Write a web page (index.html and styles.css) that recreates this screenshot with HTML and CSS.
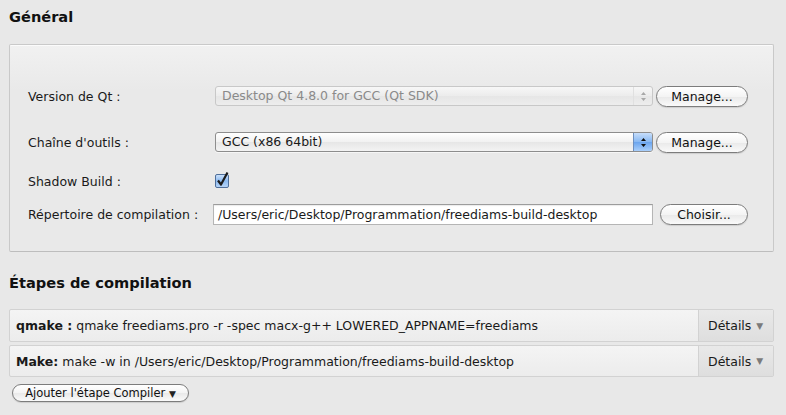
FILE: index.html
```html
<!DOCTYPE html>
<html lang="fr">
<head>
<meta charset="utf-8">
<title>Paramètres de compilation</title>
<link rel="stylesheet" href="styles.css">
</head>
<body>
<div class="page">
  <h2 class="section-title">Général</h2>
  <div class="group">
    <div class="form-row row-qt">
      <span class="label">Version de Qt :</span>
      <div class="combo combo-disabled">
        <span class="combo-text">Desktop Qt 4.8.0 for GCC (Qt SDK)</span>
        <span class="combo-arrows">
          <svg width="7" height="11" viewBox="0 0 7 11"><path d="M3.5 1 L6 4 H1 Z M3.5 10 L6 7 H1 Z" fill="#a8a8a8"/></svg>
        </span>
      </div>
      <button class="pill-btn btn-manage">Manage...</button>
    </div>
    <div class="form-row row-tool">
      <span class="label">Chaîne d'outils :</span>
      <div class="combo combo-active">
        <span class="combo-text">GCC (x86 64bit)</span>
        <span class="combo-arrows">
          <svg width="7" height="11" viewBox="0 0 7 11"><path d="M3.5 1 L6 4 H1 Z M3.5 10 L6 7 H1 Z" fill="#111"/></svg>
        </span>
      </div>
      <button class="pill-btn btn-manage">Manage...</button>
    </div>
    <div class="form-row row-shadow">
      <span class="label">Shadow Build :</span>
      <span class="checkbox">
        <svg width="17" height="17" viewBox="0 0 17 17">
          <defs>
            <linearGradient id="cbg" x1="0" y1="0" x2="0" y2="1">
              <stop offset="0" stop-color="#cfe3fb"/>
              <stop offset="0.5" stop-color="#8cbaf0"/>
              <stop offset="1" stop-color="#b9d6f8"/>
            </linearGradient>
          </defs>
          <rect x="1.5" y="3.5" width="13" height="13" rx="1.5" fill="url(#cbg)" stroke="#4f6f9a"/>
          <path d="M4 9.5 L7 13.5 L13.5 1.5" fill="none" stroke="#1c1c1c" stroke-width="2.2" stroke-linejoin="round"/>
        </svg>
      </span>
    </div>
    <div class="form-row row-dir">
      <span class="label">Répertoire de compilation :</span>
      <div class="line-edit">/Users/eric/Desktop/Programmation/freediams-build-desktop</div>
      <button class="pill-btn btn-choose">Choisir...</button>
    </div>
  </div>

  <h2 class="section-title steps-title">Étapes de compilation</h2>
  <div class="step">
    <div class="step-text"><b>qmake :</b> qmake freediams.pro -r -spec macx-g++ LOWERED_APPNAME=freediams</div>
    <div class="step-details">Détails <span class="tri">▼</span></div>
  </div>
  <div class="step">
    <div class="step-text"><b>Make:</b> make -w in /Users/eric/Desktop/Programmation/freediams-build-desktop</div>
    <div class="step-details">Détails <span class="tri">▼</span></div>
  </div>
  <button class="pill-btn btn-add">Ajouter l'étape Compiler <span class="add-tri">▼</span></button>
</div>
</body>
</html>
```

FILE: styles.css
```css
* { box-sizing: border-box; }

html, body {
  margin: 0;
  padding: 0;
  background: #e8e8e8;
}

body {
  font-family: "DejaVu Sans", "Liberation Sans", sans-serif;
  font-size: 12.5px;
  color: #1a1a1a;
  width: 786px;
  height: 415px;
  overflow: hidden;
}

.page {
  padding: 0 12px 0 9px;
}

.section-title {
  margin: 0;
  font-size: 14.6px;
  font-weight: bold;
  color: #111;
  height: 20px;
  line-height: 20px;
  padding-top: 7px;
  margin-bottom: 24px;
}

.group {
  border: 1px solid #c9c9c9;
  border-bottom-color: #bdbdbd;
  border-radius: 2px;
  background: linear-gradient(#f1f1f1, #e9e9e9 45px, #e9e9e9);
  height: 208px;
  padding: 40px 0 0 18px;
  box-shadow: inset 0 1px 0 #fbfbfb;
}

.form-row {
  display: grid;
  grid-template-columns: 187px 438px auto;
  align-items: center;
  height: 22px;
}

.row-tool { margin-top: 24px; }
.row-shadow { margin-top: 17px; }
.row-dir { margin-top: 11px; grid-template-columns: 185px 440px auto; }

.label {
  color: #1a1a1a;
  white-space: nowrap;
}

.combo {
  height: 20px;
  border: 1px solid #a6a6a6;
  border-radius: 3px;
  display: flex;
  align-items: stretch;
  background: linear-gradient(#ffffff, #f1f1f1 50%, #e6e6e6 51%, #f3f3f3);
  overflow: hidden;
}

.combo-text {
  flex: 1;
  padding-left: 6px;
  line-height: 18px;
  white-space: nowrap;
}

.combo-arrows {
  width: 19px;
  display: flex;
  align-items: center;
  justify-content: center;
}

.combo-disabled {
  border-color: #c8c8c8;
  background: linear-gradient(#f7f7f7, #ececec 50%, #e6e6e6 51%, #ededed);
}

.combo-disabled .combo-text { color: #8a8a8a; }

.combo-disabled .combo-arrows {
  border-left: 1px solid #e0e0e0;
}

.combo-active {
  border-color: #8d8d8d;
  box-shadow: 0 1px 0 rgba(255,255,255,0.6);
}

.combo-active .combo-arrows {
  border-left: 1px solid #6d8fbf;
  background: linear-gradient(#c7defb, #86b7f2 50%, #6aa4ee 51%, #a9cffb);
}

.pill-btn {
  font-family: inherit;
  font-size: 12.5px;
  color: #111;
  height: 21px;
  border: 1px solid #7c7c7c;
  border-radius: 11px;
  background: linear-gradient(#ffffff, #f4f4f4 50%, #e9e9e9 51%, #fafafa);
  padding: 0;
  box-shadow: 0 1px 1px rgba(0,0,0,0.12);
  cursor: default;
}

.btn-manage {
  width: 92px;
  margin-left: 3px;
}

.btn-choose {
  width: 88px;
  margin-left: 7px;
}

.checkbox {
  display: flex;
  align-items: center;
  height: 17px;
  margin-left: -1px;
  margin-top: -3px;
}

.line-edit {
  height: 21px;
  border: 1px solid #b5b5b5;
  border-top-color: #9c9c9c;
  background: #fff;
  line-height: 19px;
  padding-left: 4px;
  white-space: nowrap;
  box-shadow: inset 0 1px 1px rgba(0,0,0,0.08);
}

.steps-title {
  padding-top: 0;
  margin-top: 21px;
  margin-bottom: 16px;
}

.step {
  display: flex;
  height: 33px;
  border: 1px solid #d2d2d2;
  border-radius: 2px;
  background: linear-gradient(#f4f4f4, #ececec);
  margin-bottom: 3px;
  width: 765px;
}

.step + .step { height: 32px; }

.step-text {
  flex: 1;
  padding-left: 6px;
  display: flex;
  align-items: center;
  gap: 4px;
  white-space: nowrap;
  color: #1a1a1a;
}

.step-text b { font-weight: bold; }

.step-details {
  width: 75px;
  border-left: 1px solid #d2d2d2;
  background: linear-gradient(#e9e9e9, #dedede);
  display: flex;
  align-items: center;
  padding-left: 9px;
  gap: 5px;
  color: #1a1a1a;
}

.tri {
  color: #7b7b7b;
  font-size: 9px;
}

.btn-add {
  width: 177px;
  height: 18px;
  margin-left: 3px;
  margin-top: 4px;
  border-radius: 9px;
  font-size: 11.5px;
  line-height: 16px;
}

.add-tri {
  font-size: 9px;
  color: #222;
}
```
